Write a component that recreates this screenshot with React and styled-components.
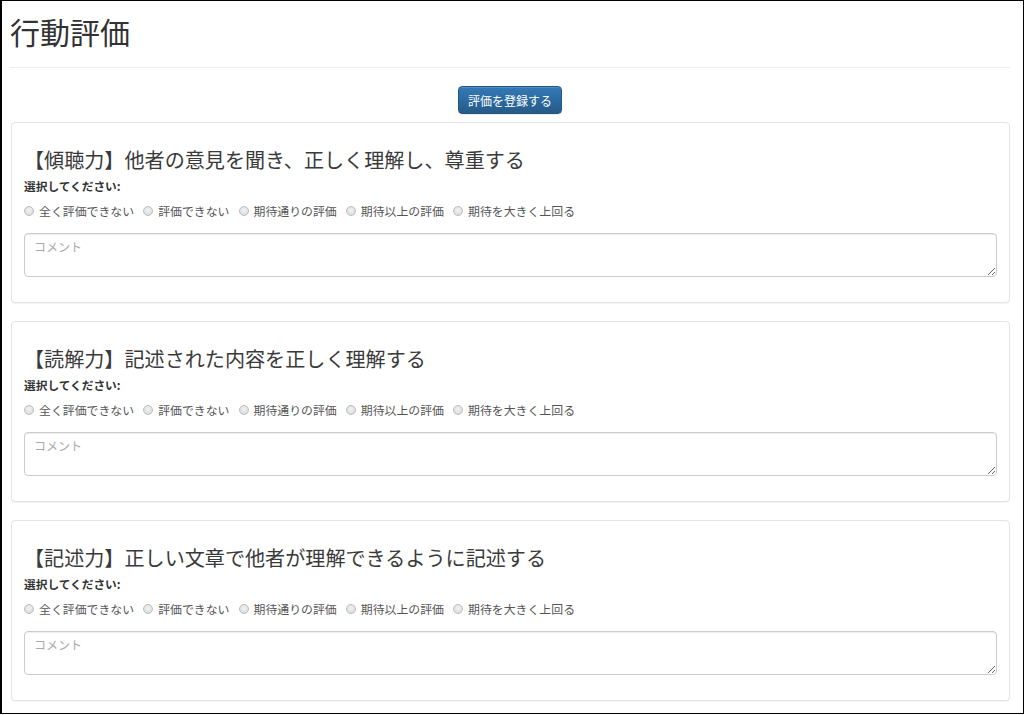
import React from "react";
import styled, { createGlobalStyle } from "styled-components";

const GlobalStyle = createGlobalStyle`
  html, body { margin: 0; padding: 0; background: #fff; }
  body {
    font-family: "Noto Sans CJK JP", "Noto Sans", sans-serif;
    color: #333;
  }
  * { box-sizing: border-box; }
`;

const Frame = styled.div`
  width: 1024px;
  height: 714px;
  border: 1px solid #000;
  border-left-width: 2px;
  overflow: hidden;
  padding: 0 13px 0 8px;
`;

const Title = styled.h1`
  margin: 14px 0 0;
  font-size: 30px;
  font-weight: 400;
  line-height: 33px;
  color: #333;
`;

const Rule = styled.hr`
  margin: 19px 0 18px;
  border: 0;
  border-top: 1px solid #eee;
`;

const Actions = styled.div`
  display: flex;
  justify-content: center;
  margin-bottom: 8px;
`;

const PrimaryButton = styled.button`
  height: 28px;
  padding: 0 9px;
  font-family: inherit;
  font-size: 12px;
  color: #fff;
  border: 1px solid #245580;
  border-radius: 4px;
  background: linear-gradient(to bottom, #337ab7 0%, #265a88 100%);
  box-shadow: inset 0 1px 0 rgba(255, 255, 255, 0.15), 0 1px 1px rgba(0, 0, 0, 0.075);
  cursor: pointer;
`;

const CardList = styled.div`
  display: flex;
  flex-direction: column;
  gap: 18px;
  padding-left: 1px;
`;

const Card = styled.section`
  border: 1px solid #e4e4e4;
  border-radius: 4px;
  background: #fff;
  box-shadow: 0 1px 1px rgba(0, 0, 0, 0.05);
  padding: 12px 12px 25px;
`;

const CardHeading = styled.h3`
  margin: 14px 0 6px;
  font-size: 20.1px;
  font-weight: 400;
  line-height: 22px;
  color: #3a3a3a;
`;

const Prompt = styled.div`
  font-size: 11.7px;
  font-weight: 700;
  line-height: 17px;
  color: #333;
`;

const RadioRow = styled.div`
  display: flex;
  align-items: center;
  gap: 9px;
  margin-top: 8px;
  line-height: 17px;
`;

const RadioLabel = styled.label`
  display: flex;
  align-items: center;
  gap: 5px;
  font-size: 11.9px;
  color: #555;
  cursor: pointer;
`;

const RadioInput = styled.input.attrs({ type: "radio" })`
  appearance: none;
  -webkit-appearance: none;
  margin: 0;
  width: 10px;
  height: 10px;
  border-radius: 50%;
  border: 1px solid #bdbdbd;
  background: radial-gradient(circle at 50% 40%, #f2f2f2 0%, #d6d6d6 100%);
  &:checked {
    background: radial-gradient(circle, #337ab7 0 35%, #e6e6e6 40% 100%);
  }
`;

const Comment = styled.textarea`
  display: block;
  width: 100%;
  height: 44px;
  margin-top: 14px;
  padding: 4px 9px;
  font-family: inherit;
  font-size: 12px;
  line-height: 17px;
  color: #555;
  border: 1px solid #ccc;
  border-radius: 4px;
  box-shadow: inset 0 1px 1px rgba(0, 0, 0, 0.075);
  resize: vertical;
  &::placeholder { color: #aaa; }
`;

const OPTIONS = [
  "全く評価できない",
  "評価できない",
  "期待通りの評価",
  "期待以上の評価",
  "期待を大きく上回る",
];

const ITEMS = [
  { id: "listen", title: "【傾聴力】他者の意見を聞き、正しく理解し、尊重する" },
  { id: "read", title: "【読解力】記述された内容を正しく理解する" },
  { id: "write", title: "【記述力】正しい文章で他者が理解できるように記述する" },
];

function EvaluationCard({ item }) {
  return (
    <Card>
      <CardHeading>{item.title}</CardHeading>
      <Prompt>選択してください:</Prompt>
      <RadioRow>
        {OPTIONS.map((opt, i) => (
          <RadioLabel key={opt}>
            <RadioInput name={item.id} value={i + 1} />
            {opt}
          </RadioLabel>
        ))}
      </RadioRow>
      <Comment placeholder="コメント" />
    </Card>
  );
}

export default function App() {
  return (
    <>
      <GlobalStyle />
      <Frame>
        <Title>行動評価</Title>
        <Rule />
        <Actions>
          <PrimaryButton>評価を登録する</PrimaryButton>
        </Actions>
        <CardList>
          {ITEMS.map((item) => (
            <EvaluationCard key={item.id} item={item} />
          ))}
        </CardList>
      </Frame>
    </>
  );
}
